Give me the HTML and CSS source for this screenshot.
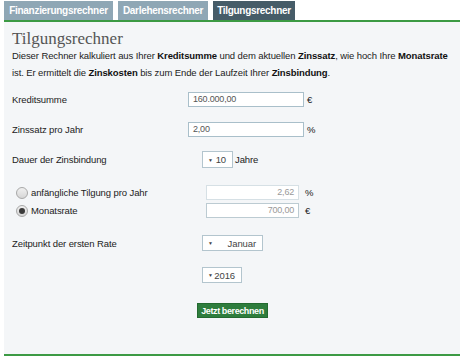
FILE: index.html
```html
<!DOCTYPE html>
<html lang="de">
<head>
<meta charset="utf-8">
<title>Tilgungsrechner</title>
<link rel="stylesheet" href="styles.css">
</head>
<body>
<div class="page">
  <nav class="tabs">
    <span class="tab">Finanzierungsrechner</span>
    <span class="tab">Darlehensrechner</span>
    <span class="tab active">Tilgungsrechner</span>
  </nav>
  <section class="panel">
    <h1 class="title">Tilgungsrechner</h1>
    <p class="intro">Dieser Rechner kalkuliert aus Ihrer <b>Kreditsumme</b> und dem aktuellen <b>Zinssatz</b>, wie hoch Ihre <b>Monatsrate</b> ist. Er ermittelt die <b>Zinskosten</b> bis zum Ende der Laufzeit Ihrer <b>Zinsbindung</b>.</p>
    <div class="form">
      <div class="row row-kredit">
        <span class="label">Kreditsumme</span>
        <span class="field"><span class="input">160.000,00</span><span class="unit">€</span></span>
      </div>
      <div class="row row-zins">
        <span class="label">Zinssatz pro Jahr</span>
        <span class="field"><span class="input">2,00</span><span class="unit">%</span></span>
      </div>
      <div class="row row-dauer">
        <span class="label">Dauer der Zinsbindung</span>
        <span class="field sel-field"><span class="select sel-10"><span class="arrow">▼</span><span>10</span></span><span class="unit">Jahre</span></span>
      </div>
      <div class="row row-radio1">
        <span class="label radio-label"><span class="radio"></span>anfängliche Tilgung pro Jahr</span>
        <span class="field radio-field"><span class="input input-ro input-light">2,62</span><span class="unit">%</span></span>
      </div>
      <div class="row row-radio2">
        <span class="label radio-label"><span class="radio checked"></span>Monatsrate</span>
        <span class="field radio-field"><span class="input input-ro">700,00</span><span class="unit">€</span></span>
      </div>
      <div class="row row-monat">
        <span class="label">Zeitpunkt der ersten Rate</span>
        <span class="field sel-field"><span class="select sel-monat"><span class="arrow">▼</span><span>Januar</span></span></span>
      </div>
      <div class="row row-jahr">
        <span class="label"></span>
        <span class="field sel-field"><span class="select sel-jahr"><span class="arrow">▼</span><span>2016</span></span></span>
      </div>
      <div class="row row-btn">
        <span class="label"></span>
        <span class="field btn-field"><span class="button">Jetzt berechnen</span></span>
      </div>
    </div>
  </section>
</div>
</body>
</html>
```
FILE: styles.css
```css
html, body {
  margin: 0;
  padding: 0;
  background: #ffffff;
}
body {
  font-family: "Liberation Sans", Arial, sans-serif;
  font-size: 9.5px;
  letter-spacing: -0.1px;
  color: #222;
}
.page {
  width: 459px;
  padding-left: 4px;
}
.tabs {
  display: flex;
  gap: 5px;
  height: 19px;
  margin-top: 1px;
}
.tab {
  display: flex;
  align-items: center;
  justify-content: center;
  background: #8fa7b5;
  color: #fff;
  font-weight: bold;
  font-size: 10px;
  letter-spacing: -0.3px;
  white-space: nowrap;
}
.tab:nth-child(1) { width: 109px; }
.tab:nth-child(2) { width: 90px; }
.tab.active { width: 82px; background: #465c68; }
.panel {
  width: 456px;
  box-sizing: border-box;
  background: #f4f6f8;
  border-top: 2px solid #3c9a44;
  border-bottom: 2px solid #3c9a44;
  padding: 8px 4px 36px 8px;
}
.title {
  margin: 0;
  font-family: "Liberation Serif", "DejaVu Serif", serif;
  font-weight: normal;
  font-size: 17px;
  line-height: 18px;
  letter-spacing: 0;
  color: #555;
}
.intro {
  margin: 0;
  margin-top: -1px;
  max-width: 443px;
  line-height: 17px;
  font-size: 9.5px;
  letter-spacing: -0.1px;
  color: #222;
}
.intro b { color: #111; }
.form {
  margin-top: 11px;
}
.row {
  display: flex;
  align-items: center;
}
.label {
  width: 176px;
  flex: none;
  color: #222;
}
.field {
  display: flex;
  align-items: center;
}
.input {
  box-sizing: border-box;
  width: 116px;
  height: 15px;
  border: 1px solid #a9bfca;
  background: #fff;
  color: #555;
  padding-left: 4px;
  line-height: 13px;
  font-size: 9px;
  letter-spacing: -0.2px;
}
.unit {
  margin-left: 3px;
  color: #222;
}
.row-kredit { height: 15px; }
.row-zins { height: 15px; margin-top: 15px; }
.row-dauer { height: 17px; margin-top: 14px; }
.row-radio1 { height: 15px; margin-top: 17px; }
.row-radio2 { height: 15px; margin-top: 3px; }
.row-monat { height: 16px; margin-top: 17px; }
.row-jahr { height: 16px; margin-top: 16px; }
.row-btn { height: 15px; margin-top: 20px; }
.sel-field { margin-left: 14px; }
.radio-field { margin-left: 18px; }
.btn-field { margin-left: 9px; }
.select {
  box-sizing: border-box;
  display: flex;
  align-items: center;
  justify-content: space-between;
  height: 100%;
  border: 1px solid #b3c5ce;
  background: #fff;
  color: #444;
  padding: 0 6px 0 5px;
  font-size: 9.5px;
  white-space: nowrap;
}
.row-dauer .select { height: 17px; }
.row-monat .select, .row-jahr .select { height: 16px; }
.arrow {
  font-size: 5px;
  color: #444;
}
.sel-10 { width: 31px; }
.sel-monat { width: 61px; }
.sel-jahr { width: 40px; }
.sel-field .unit { margin-left: 2px; }
.input-ro {
  width: 93px;
  text-align: right;
  padding-left: 0;
  padding-right: 4px;
  color: #999;
  border-color: #bccbd2;
}
.input-light { border-color: #d6e0e5; }
.radio-field .unit { margin-left: 6px; }
.radio-label {
  display: flex;
  align-items: center;
  padding-left: 4px;
  width: 172px;
  white-space: nowrap;
}
.radio {
  box-sizing: border-box;
  width: 12px;
  height: 12px;
  border-radius: 50%;
  border: 1px solid #a8a8a8;
  background: linear-gradient(#f0f0f0, #d6d6d6);
  margin-right: 3px;
  position: relative;
}
.radio.checked::after {
  content: "";
  position: absolute;
  left: 2px;
  top: 2px;
  width: 6px;
  height: 6px;
  border-radius: 50%;
  background: #3a3a3a;
}
.button {
  box-sizing: border-box;
  display: flex;
  align-items: center;
  justify-content: center;
  width: 71px;
  height: 15px;
  background: #2e7d3d;
  border: 1px solid #236a30;
  color: #fff;
  font-family: "Liberation Sans", Arial, sans-serif;
  font-weight: bold;
  font-size: 9px;
  letter-spacing: -0.4px;
  white-space: nowrap;
}
```
